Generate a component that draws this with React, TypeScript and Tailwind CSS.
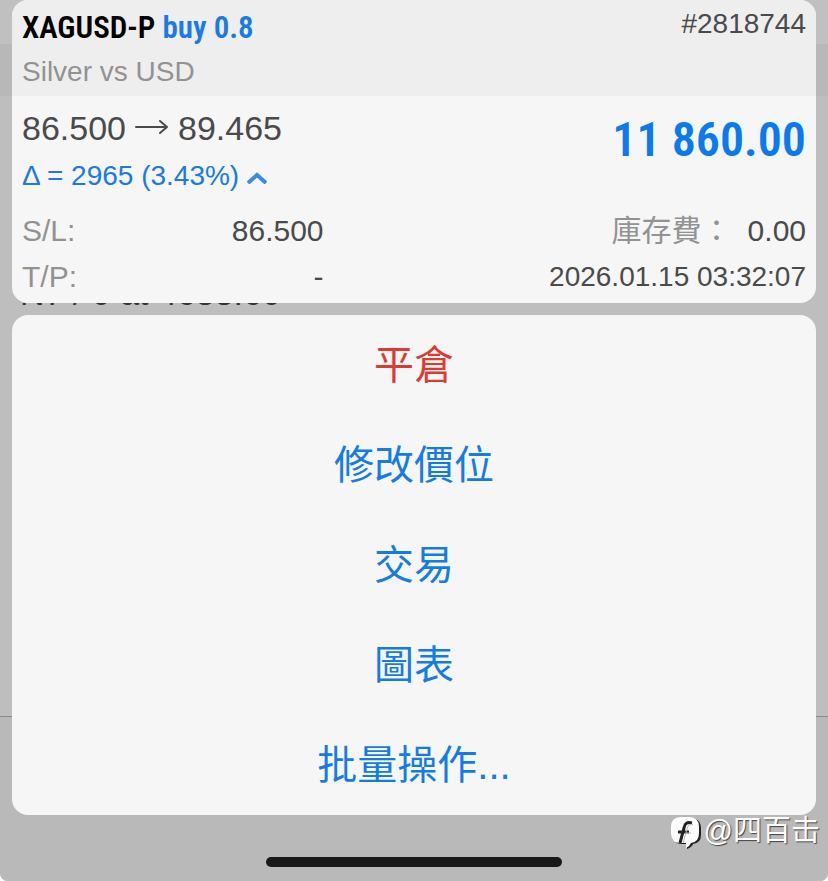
const details = {
    symbol: "XAGUSD-P",
    side: "buy 0.8",
    ticket: "#2818744",
    name: "Silver vs USD",
    open: "86.500",
    current: "89.465",
    delta: "Δ = 2965 (3.43%)",
    profit: "11 860.00",
    time: "2026.01.15 03:32:07",
};

const actions = ["修改價位", "交易", "圖表", "批量操作..."];

const Backdrop = () => {
    return (
        <div className="absolute inset-0 flex flex-col bg-white" aria-hidden="true">
            <div className="flex grow flex-col overflow-hidden rounded-b-lg bg-[#bebebe]">
                <div className="h-11 bg-[#c0c0c0]"></div>
                <div className="h-13 bg-[#b8b8b8]"></div>
                <div className="grow"></div>
                <div className="h-[165px] border-t border-[#8a8a8a] bg-[#b9b9b9]"></div>
            </div>
        </div>
    );
};

const PositionCard = () => {
    return (
        <section className="overflow-hidden rounded-2xl bg-[#f6f6f6] text-[28px] text-[#4a4a4c]">
            <header className="h-24 bg-[#eeeeee] px-[10px] pt-2">
                <div className="flex justify-between">
                    <h1 className="font-['Roboto_Condensed','Liberation_Sans_Narrow',sans-serif] text-[31px] leading-10 font-semibold text-black">
                        {details.symbol} <span className="text-[#1a7ae6]">{details.side}</span>
                    </h1>
                    <p className="leading-8">{details.ticket}</p>
                </div>
                <p className="leading-12 text-[#929292]">{details.name}</p>
            </header>
            <div className="flex items-center justify-between px-[10px] pt-2">
                <div>
                    <p className="flex items-center gap-2 text-[34px] leading-12">
                        {details.open}
                        <svg width="36" height="20" viewBox="0 0 36 20" fill="none" stroke="currentColor" strokeWidth="2" strokeLinecap="round" strokeLinejoin="round">
                            <path d="M2 9h31M26 3l7 6-7 6" />
                        </svg>
                        {details.current}
                    </p>
                    <button className="flex items-center gap-2 leading-12 text-[#1a7ae6]">
                        {details.delta}
                        <svg width="20" height="16" viewBox="0 0 20 16" fill="none" stroke="#3a8ae6" strokeWidth="4">
                            <path d="M1 15l9-8 9 8" />
                        </svg>
                    </button>
                </div>
                <p className="pb-6 font-['Roboto_Condensed','Liberation_Sans_Narrow',sans-serif] text-[48px] leading-12 font-semibold text-[#0a7af0]">{details.profit}</p>
            </div>
            <dl className="grid grid-cols-[5fr_8fr] px-[10px] pt-2 pb-[3px] text-[30px] leading-[46px]">
                <div className="flex justify-between">
                    <dt className="text-[#929292]">S/L:</dt>
                    <dd>86.500</dd>
                </div>
                <div className="flex justify-end gap-4">
                    <dt className="text-[#929292]">庫存費：</dt>
                    <dd>0.00</dd>
                </div>
                <div className="flex justify-between">
                    <dt className="text-[#929292]">T/P:</dt>
                    <dd>-</dd>
                </div>
                <dd className="text-right text-[28px]">{details.time}</dd>
            </dl>
        </section>
    );
};

// the list row behind the sheet, only its lower edge shows between the two cards
const HiddenRow = () => {
    return (
        <div className="flex h-3 items-end overflow-hidden px-2" aria-hidden="true">
            <p className="text-[34px] leading-11 whitespace-nowrap text-[#333]">N7 / 0 at 4633.60</p>
        </div>
    );
};

const ActionSheet = () => {
    return (
        <section className="flex flex-col rounded-2xl bg-[#f6f6f6] text-[40px] leading-[100px] text-[#147ce5]">
            <button className="text-[#dd3b30]">平倉</button>
            {actions.map((label) => (
                <button key={label}>{label}</button>
            ))}
        </section>
    );
};

const Watermark = () => {
    return (
        <div className="absolute right-2 bottom-7 flex items-center gap-[2px] font-['Liberation_Sans','Noto_Sans_CJK_SC',sans-serif] text-[29px] leading-11 text-white [text-shadow:1px_1px_1px_#444]" lang="zh-Hans">
            <svg width="32" height="36" viewBox="0 0 32 36">
                <path d="M12 5h8q11 0 11 11v6q0 8-8 9-1 3-6 5v-5h-5Q3 31 3 21v-5Q3 5 12 5z" fill="#222" />
                <path d="M11 4h8q10 0 10 10v6q0 9-8 10-1 3-5 5v-5h-5Q1 30 1 20v-6Q1 4 11 4z" fill="#fff" />
                <path d="M22 10q-7-2-8 5l-4 15M8 19h11" fill="none" stroke="#222" strokeWidth="3" />
                <path d="M23 12q-5-2-6 4l-4 14M16 20h5" fill="none" stroke="#b9b9b9" strokeWidth="1" />
            </svg>
            @四百击
        </div>
    );
};

const App = () => {
    return (
        <main className="relative flex min-h-screen flex-col font-['Liberation_Sans','Noto_Sans_CJK_TC',sans-serif]" lang="zh-Hant">
            <Backdrop />
            <div className="relative flex grow flex-col px-3">
                <PositionCard />
                <HiddenRow />
                <ActionSheet />
            </div>
            <div className="relative mx-auto mb-[14px] h-[10px] w-[296px] rounded-full bg-[#191919]"></div>
            <Watermark />
        </main>
    );
};

export default App;
